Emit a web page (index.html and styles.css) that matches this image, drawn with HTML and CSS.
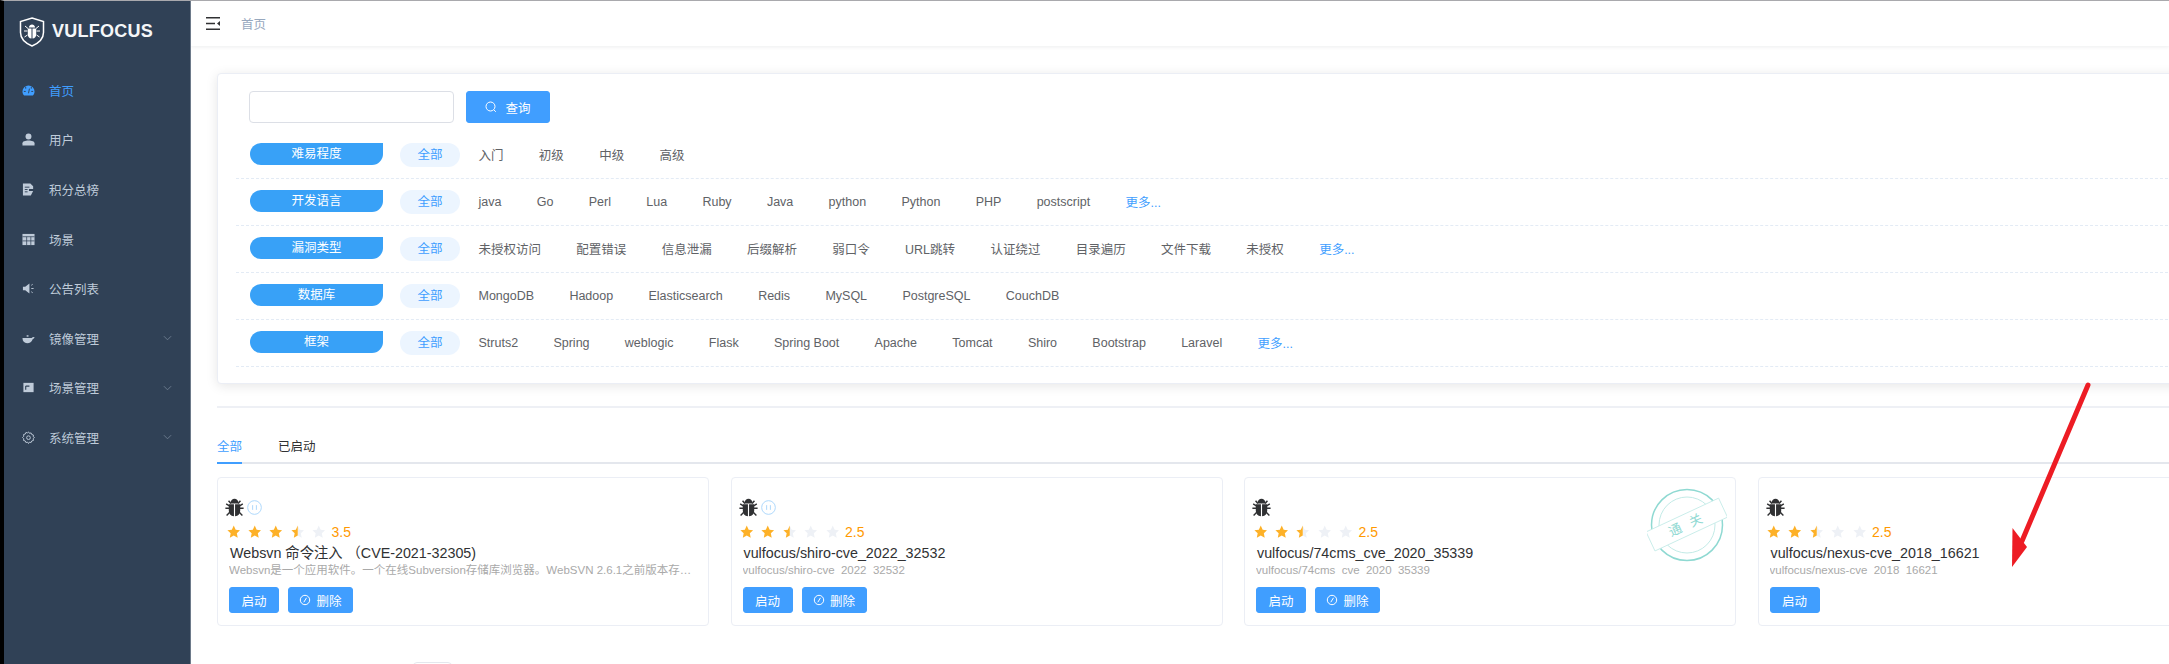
FILE: index.html
```html
<!DOCTYPE html>
<html lang="zh-CN">
<head>
  <meta charset="UTF-8" />
  <meta name="viewport" content="width=device-width, initial-scale=1" />
  <title>Vulfocus</title>
  <link rel="stylesheet" href="styles.css">
</head>
<body>
  <svg class="defs" width="0" height="0">
    <defs>
      <symbol id="star" viewBox="0 0 24 24">
        <path d="M12 1l3.4 7.3 7.9 1-5.8 5.5 1.5 7.9L12 18.8l-7 3.9 1.500-7.900L.7 9.300l7.900-1z" />
      </symbol>
      <symbol id="star-half" viewBox="0 0 24 24">
        <path fill="#eef1f6" d="M12 1l3.400 7.300 7.900 1-5.800 5.500 1.500 7.900L12 18.800z" />
        <path fill="#fdb128" d="M12 1L8.600 8.300l-7.900 1 5.800 5.500-1.500 7.900 7-3.900z" />
      </symbol>
      <symbol id="bug" viewBox="0 0 24 24">
        <path d="M6.800 6.800C7 3 9.400 1 12 1s5 2 5.200 5.800z" />
        <path d="M4.800 8h6.500v15C7 22.700 4.800 19.800 4.800 16zM12.700 8h6.500v8c0 3.800-2.200 6.700-6.500 7z" />
        <path d="M4.500 3.500L7.400 7M19.500 3.500L16.600 7M.5 13h5M23.500 13h-5M2 22l4-4M22 22l-4-4M1.500 7.500l4 2.500M22.500 7.500l-4 2.500" fill="none" stroke="currentColor" stroke-width="1.800" />
      </symbol>
      <symbol id="pause" viewBox="0 0 16 16">
        <circle cx="8" cy="8" r="7.300" fill="none" stroke="#a9d5fb" stroke-width="1" />
        <path d="M6 5.500v5M10 5.500v5" fill="none" stroke="#a9d5fb" stroke-width="1" />
      </symbol>
      <symbol id="chevron" viewBox="0 0 10 6">
        <path d="M1 1l4 4 4-4" fill="none" stroke="currentColor" stroke-width="1" />
      </symbol>
      <symbol id="ban" viewBox="0 0 12 12">
        <circle cx="6" cy="6" r="4.700" fill="none" stroke="currentColor" stroke-width="1" />
        <path d="M7.500 3.800L4.800 8.200" fill="none" stroke="currentColor" stroke-width="1" />
      </symbol>
    </defs>
  </svg>

  <div class="app">
    <aside class="sidebar">
      <div class="logo">
        <svg class="logo-icon" viewBox="0 0 26 30">
          <path d="M13 1l11.500 3.500v11c0 6.500-4.500 10.500-11.500 13.500C6 26 1.500 22 1.500 15.500v-11z" fill="none" stroke="#fff" stroke-width="1.500" />
          <path d="M9.800 10.500c.4-2 1.700-3 3.200-3s2.800 1 3.200 3zM8.800 11.500h3.700v10c-2.400-.2-3.700-1.800-3.700-4.300zM13.500 11.500h3.700v5.700c0 2.500-1.300 4.100-3.700 4.300z" fill="#fff" />
          <path d="M5 14h3.500M21 14h-3.500M5.500 20l3-2M20.500 20l-3-2M6 9l3 2.500M20 9l-3 2.500" fill="none" stroke="#fff" stroke-width="1" />
        </svg>
        <span class="logo-text">VULFOCUS</span>
      </div>
      <nav class="menu">
        <a class="menu-item active">
          <svg class="menu-icon" viewBox="0 0 14 14"><path d="M7 1.500a6.500 6.500 0 0 0-6.500 6.500c0 1.800.7 3.300 1.800 4.500h9.400c1.100-1.200 1.800-2.700 1.800-4.500A6.500 6.500 0 0 0 7 1.500z" fill="currentColor" /><path d="M4 3v2M10 3v2M2 8h2M10 8h2M7 10l1-5" stroke="#304156" stroke-width="1" fill="none" /></svg>
          <span>首页</span>
        </a>
        <a class="menu-item">
          <svg class="menu-icon" viewBox="0 0 14 14"><circle cx="7" cy="3.800" r="3.200" fill="currentColor" /><path d="M.5 13.500V11c0-2 2.800-3 6.500-3s6.500 1 6.500 3v2.500z" fill="currentColor" /></svg>
          <span>用户</span>
        </a>
        <a class="menu-item">
          <svg class="menu-icon" viewBox="0 0 14 14"><path d="M1 .5h8l3 3v3H7.500v2H12L9.500 13.500H1z" fill="currentColor" /><path d="M3 4.500h5M3 7h3M3 9.500h3" stroke="#304156" stroke-width="1" /></svg>
          <span>积分总榜</span>
        </a>
        <a class="menu-item">
          <svg class="menu-icon" viewBox="0 0 14 14"><path d="M.5 1h13v12H.500z" fill="currentColor" /><path d="M.5 4h13M5 4v9M9.500 4v9M.5 8.500h13" stroke="#304156" stroke-width=".8" /></svg>
          <span>场景</span>
        </a>
        <a class="menu-item">
          <svg class="menu-icon" viewBox="0 0 14 14"><path d="M1 5h2.500L8 1.500v11L3.500 9H1z" fill="currentColor" /><path d="M10 3.500l1.500-1M10 7h2.500M10 10.500l1.500 1" stroke="currentColor" stroke-width="1" /></svg>
          <span>公告列表</span>
        </a>
        <a class="menu-item">
          <svg class="menu-icon" viewBox="0 0 14 14"><path d="M.5 6.500h10c.5-.8 1.500-1.300 3-1-.2 1.200-1 2-2 2.300C10.500 10.500 8.500 12 5.500 12 2.500 12 .5 10 .5 6.500z" fill="currentColor" /><path d="M5 5V3.500h2V5" fill="currentColor" /></svg>
          <span>镜像管理</span>
          <svg class="chevron"><use href="#chevron" /></svg>
        </a>
        <a class="menu-item">
          <svg class="menu-icon" viewBox="0 0 14 14"><path d="M1.500 2h11v10h-11z" fill="currentColor" /><path d="M4 5.500h4M4 5.500v4" stroke="#304156" stroke-width="1.200" /></svg>
          <span>场景管理</span>
          <svg class="chevron"><use href="#chevron" /></svg>
        </a>
        <a class="menu-item">
          <svg class="menu-icon" viewBox="0 0 14 14"><path d="M7 1l1 1.500 1.800-.4.700 1.700 1.800.5-.2 1.900L13.400 7l-1.300 1.300.2 1.900-1.800.5-.7 1.700-1.800-.4L7 13.500 6 12l-1.800.4-.7-1.700-1.800-.5.200-1.900L.6 7l1.300-1.300-.2-1.900 1.800-.5.700-1.700 1.800.4z" fill="none" stroke="currentColor" stroke-width="1" /><circle cx="7" cy="7.200" r="2" fill="none" stroke="currentColor" stroke-width="1" /></svg>
          <span>系统管理</span>
          <svg class="chevron"><use href="#chevron" /></svg>
        </a>
      </nav>
    </aside>

    <main class="main">
      <header class="navbar">
        <svg class="hamburger" viewBox="0 0 14 13">
          <path d="M0 .7h14M0 6.500h9M0 12.300h14" stroke="#303133" stroke-width="1.400" fill="none" />
          <path d="M14 4v5l-3-2.500z" fill="#303133" />
        </svg>
        <span class="crumb">首页</span>
      </header>

      <section class="panel">
        <div class="search">
          <input class="search-input" type="text" />
          <button class="btn btn-search">
            <svg class="search-icon" viewBox="0 0 12 12"><circle cx="5.500" cy="5.500" r="4.500" fill="none" stroke="currentColor" stroke-width="1" /><path d="M8.800 8.800l2 2" stroke="currentColor" stroke-width="1" /></svg>
            查询
          </button>
        </div>

        <div class="filter">
          <span class="filter-label">难易程度</span>
          <span class="filter-all">全部</span>
          <a>入门</a><a>初级</a><a>中级</a><a>高级</a>
        </div>
        <div class="filter">
          <span class="filter-label">开发语言</span>
          <span class="filter-all">全部</span>
          <a>java</a><a>Go</a><a>Perl</a><a>Lua</a><a>Ruby</a><a>Java</a><a>python</a><a>Python</a><a>PHP</a><a>postscript</a>
          <a class="more">更多...</a>
        </div>
        <div class="filter">
          <span class="filter-label">漏洞类型</span>
          <span class="filter-all">全部</span>
          <a>未授权访问</a><a>配置错误</a><a>信息泄漏</a><a>后缀解析</a><a>弱口令</a><a>URL跳转</a><a>认证绕过</a><a>目录遍历</a><a>文件下载</a><a>未授权</a>
          <a class="more">更多...</a>
        </div>
        <div class="filter">
          <span class="filter-label">数据库</span>
          <span class="filter-all">全部</span>
          <a>MongoDB</a><a>Hadoop</a><a>Elasticsearch</a><a>Redis</a><a>MySQL</a><a>PostgreSQL</a><a>CouchDB</a>
        </div>
        <div class="filter">
          <span class="filter-label">框架</span>
          <span class="filter-all">全部</span>
          <a>Struts2</a><a>Spring</a><a>weblogic</a><a>Flask</a><a>Spring Boot</a><a>Apache</a><a>Tomcat</a><a>Shiro</a><a>Bootstrap</a><a>Laravel</a>
          <a class="more">更多...</a>
        </div>
      </section>

      <hr class="divider" />

      <div class="tabs">
        <span class="tab active">全部</span>
        <span class="tab">已启动</span>
      </div>

      <div class="cards">
        <article class="card">
          <div class="card-top">
            <svg class="bug"><use href="#bug" /></svg>
            <svg class="pause"><use href="#pause" /></svg>
          </div>
          <div class="rate">
            <svg class="star"><use href="#star" /></svg>
            <svg class="star"><use href="#star" /></svg>
            <svg class="star"><use href="#star" /></svg>
            <svg class="star"><use href="#star-half" /></svg>
            <svg class="star off"><use href="#star" /></svg>
            <span class="score">3.5</span>
          </div>
          <h3 class="card-title">Websvn 命令注入 （CVE-2021-32305)</h3>
          <p class="card-desc">Websvn是一个应用软件。一个在线Subversion存储库浏览器。WebSVN 2.6.1之前版本存在命令注入漏洞，攻击者可利用该漏洞执行任意命令。</p>
          <div class="card-actions">
            <button class="btn btn-start">启动</button>
            <button class="btn btn-del"><svg class="ban"><use href="#ban" /></svg>删除</button>
          </div>
        </article>

        <article class="card">
          <div class="card-top">
            <svg class="bug"><use href="#bug" /></svg>
            <svg class="pause"><use href="#pause" /></svg>
          </div>
          <div class="rate">
            <svg class="star"><use href="#star" /></svg>
            <svg class="star"><use href="#star" /></svg>
            <svg class="star"><use href="#star-half" /></svg>
            <svg class="star off"><use href="#star" /></svg>
            <svg class="star off"><use href="#star" /></svg>
            <span class="score">2.5</span>
          </div>
          <h3 class="card-title">vulfocus/shiro-cve_2022_32532</h3>
          <p class="card-desc">vulfocus/shiro-cve_2022_32532</p>
          <div class="card-actions">
            <button class="btn btn-start">启动</button>
            <button class="btn btn-del"><svg class="ban"><use href="#ban" /></svg>删除</button>
          </div>
        </article>

        <article class="card">
          <div class="card-top">
            <svg class="bug"><use href="#bug" /></svg>
          </div>
          <div class="rate">
            <svg class="star"><use href="#star" /></svg>
            <svg class="star"><use href="#star" /></svg>
            <svg class="star"><use href="#star-half" /></svg>
            <svg class="star off"><use href="#star" /></svg>
            <svg class="star off"><use href="#star" /></svg>
            <span class="score">2.5</span>
          </div>
          <h3 class="card-title">vulfocus/74cms_cve_2020_35339</h3>
          <p class="card-desc">vulfocus/74cms_cve_2020_35339</p>
          <div class="card-actions">
            <button class="btn btn-start">启动</button>
            <button class="btn btn-del"><svg class="ban"><use href="#ban" /></svg>删除</button>
          </div>
          <svg class="stamp" viewBox="0 0 80 80">
            <circle cx="40" cy="40" r="35.500" fill="none" stroke="#8fd9d2" stroke-width="1.500" />
            <circle cx="40" cy="40" r="28" fill="none" stroke="#c3ebe7" stroke-width="1" />
            <g transform="rotate(-25 40 40)">
              <rect x="0" y="29" width="80" height="21" fill="#fff" stroke="#c3ebe7" stroke-width=".8" />
              <text class="stamp-text" x="40" y="44" text-anchor="middle">通 关</text>
            </g>
          </svg>
        </article>

        <article class="card">
          <div class="card-top">
            <svg class="bug"><use href="#bug" /></svg>
          </div>
          <div class="rate">
            <svg class="star"><use href="#star" /></svg>
            <svg class="star"><use href="#star" /></svg>
            <svg class="star"><use href="#star-half" /></svg>
            <svg class="star off"><use href="#star" /></svg>
            <svg class="star off"><use href="#star" /></svg>
            <span class="score">2.5</span>
          </div>
          <h3 class="card-title">vulfocus/nexus-cve_2018_16621</h3>
          <p class="card-desc">vulfocus/nexus-cve_2018_16621</p>
          <div class="card-actions">
            <button class="btn btn-start">启动</button>
          </div>
        </article>
      </div>

      <div class="pager"></div>
    </main>
  </div>

  <svg class="arrow" viewBox="0 0 90 200">
    <path d="M78 4L12 160" stroke="#ed1c24" stroke-width="5" stroke-linecap="round" fill="none" />
    <path d="M2 186L2.500 147 17 166z" fill="#ed1c24" />
  </svg>
</body>
</html>
```

FILE: styles.css
```css
* {
  box-sizing: border-box;
}

html,
body {
  margin: 0;
  height: 100%;
  overflow: hidden;
  background: #fff;
}

body {
  font-family: "Liberation Sans", "Noto Sans CJK SC", sans-serif;
  font-size: 12.5px;
  color: #606266;
}

.defs {
  position: absolute;
}

.app {
  display: flex;
  height: 100%;
  border-top: 1px solid #a9a9ad;
  border-left: 4px solid #000;
}

/* sidebar */
.sidebar {
  flex: 0 0 187px;
  background: #304156;
  border-right: 1px solid #6d7a8a;
}

.logo {
  display: flex;
  align-items: center;
  height: 31px;
  margin-top: 15px;
  padding-left: 15px;
}

.logo-icon {
  width: 26px;
  height: 30px;
}

.logo-text {
  margin-left: 7px;
  font-size: 18px;
  font-weight: 700;
  letter-spacing: .25px;
  color: #f4f6f8;
}

.menu {
  margin-top: 18.5px;
}

.menu-item {
  display: flex;
  align-items: center;
  height: 49.6px;
  padding-left: 18px;
  color: #bfcbd9;
}

.menu-item.active {
  color: #409eff;
}

.menu-icon {
  width: 13px;
  height: 13px;
  margin-right: 14px;
}

.chevron {
  width: 9px;
  height: 6px;
  margin-left: auto;
  margin-right: 18px;
  color: #6f7f92;
}

/* main column */
.main {
  flex: 1;
  min-width: 0;
  overflow: hidden;
}

.navbar {
  display: flex;
  align-items: center;
  height: 45px;
  padding-left: 15px;
  box-shadow: 0 1px 4px rgba(0, 21, 41, .08);
}

.hamburger {
  width: 14px;
  height: 13px;
  margin-right: 21px;
}

.crumb {
  color: #97a8be;
}

.panel {
  margin: 27px -20px 0 26px;
  height: 311px;
  padding-top: 17px;
  background: #fff;
  border: 1px solid #ebeef5;
  border-radius: 4px;
  box-shadow: 0 2px 12px rgba(0, 0, 0, .1);
}

.search {
  display: flex;
  gap: 12px;
  height: 41px;
  padding-left: 31px;
}

.search-input {
  width: 205px;
  height: 32px;
  border: 1px solid #dcdfe6;
  border-radius: 4px;
}

.btn {
  display: inline-flex;
  align-items: center;
  justify-content: center;
  height: 26px;
  padding: 0;
  border: 1px solid #409eff;
  border-radius: 3px;
  background: #409eff;
  color: #fff;
  font: inherit;
}

.btn-search {
  width: 84px;
  height: 32px;
}

.search-icon {
  width: 12px;
  height: 12px;
  margin-right: 8px;
}

.filter {
  display: flex;
  align-items: center;
  height: 47px;
  margin-left: 18px;
  padding-left: 14px;
  border-bottom: 1px dashed #e3ebf5;
}

.filter a {
  margin-right: 35.3px;
  margin-top: -1px;
  white-space: nowrap;
}

.filter a.more {
  color: #409eff;
}

.filter-label {
  width: 133px;
  height: 22px;
  margin-right: 17px;
  margin-top: -3px;
  background: #38a1f7;
  border-radius: 11px 0 11px 11px;
  color: #fff;
  line-height: 22px;
  text-align: center;
}

.filter-all {
  width: 60px;
  height: 24px;
  margin-right: 18.5px;
  margin-top: -1px;
  background: #ecf5ff;
  border-radius: 12px;
  color: #409eff;
  line-height: 24px;
  text-align: center;
}

.divider {
  height: 2px;
  margin: 22px 0 0 26px;
  border: 0;
  background: #eef0f5;
}

.tabs {
  display: flex;
  gap: 36px;
  height: 40px;
  margin: 16px 0 0 26px;
  border-bottom: 2px solid #e4e7ed;
}

.tab {
  height: 40px;
  color: #303133;
  line-height: 46px;
}

.tab.active {
  border-bottom: 2px solid #409eff;
  color: #409eff;
}

/* cards */
.cards {
  display: grid;
  grid-template-columns: repeat(4, 492px);
  column-gap: 21.5px;
  margin: 13px 0 0 26px;
}

.card {
  position: relative;
  height: 149px;
  padding: 20px 0 0 7px;
  background: #fff;
  border: 1px solid #ebeef5;
  border-radius: 4px;
}

.card-top {
  display: flex;
  align-items: center;
  gap: 3px;
  height: 19px;
}

.bug {
  width: 19px;
  height: 19px;
  fill: #303133;
  color: #303133;
}

.pause {
  width: 15px;
  height: 15px;
}

.rate {
  display: flex;
  align-items: center;
  height: 18px;
  margin-top: 6px;
  padding-left: 1.500px;
}

.star {
  width: 13.500px;
  height: 13.500px;
  margin-right: 7.900px;
  fill: #fdb128;
}

.star.off {
  fill: #eef1f6;
}

.score {
  margin-left: -2px;
  font-size: 14px;
  color: #ff9900;
}

.card-title {
  margin: 1px 0 0 5px;
  font-size: 14.300px;
  font-weight: 400;
  line-height: 22px;
  color: #303133;
  white-space: nowrap;
}

/* height cuts off the underscores, as in the original page */
.card-desc {
  width: 463px;
  height: 11px;
  margin: 0 0 0 4px;
  overflow: hidden;
  font-size: 11.500px;
  line-height: 12px;
  color: #a9a9a9;
  white-space: nowrap;
  text-overflow: ellipsis;
}

.card-actions {
  display: flex;
  gap: 9px;
  margin: 12px 0 0 4px;
}

.btn-start {
  width: 50px;
}

.btn-del {
  width: 65px;
}

.ban {
  width: 12px;
  height: 12px;
  margin-right: 5px;
}

.stamp {
  position: absolute;
  top: 7px;
  right: 8px;
  width: 80px;
  height: 80px;
}

.stamp-text {
  font-size: 13px;
  fill: #8fd9d2;
  letter-spacing: 3px;
}

.pager {
  width: 39px;
  height: 24px;
  margin: 36px 0 0 222px;
  border: 1px solid #e4e7ed;
  border-radius: 4px;
}

/* annotation drawn on top of the screenshot */
.arrow {
  position: absolute;
  top: 381px;
  left: 2010px;
  width: 90px;
  height: 200px;
}
```
